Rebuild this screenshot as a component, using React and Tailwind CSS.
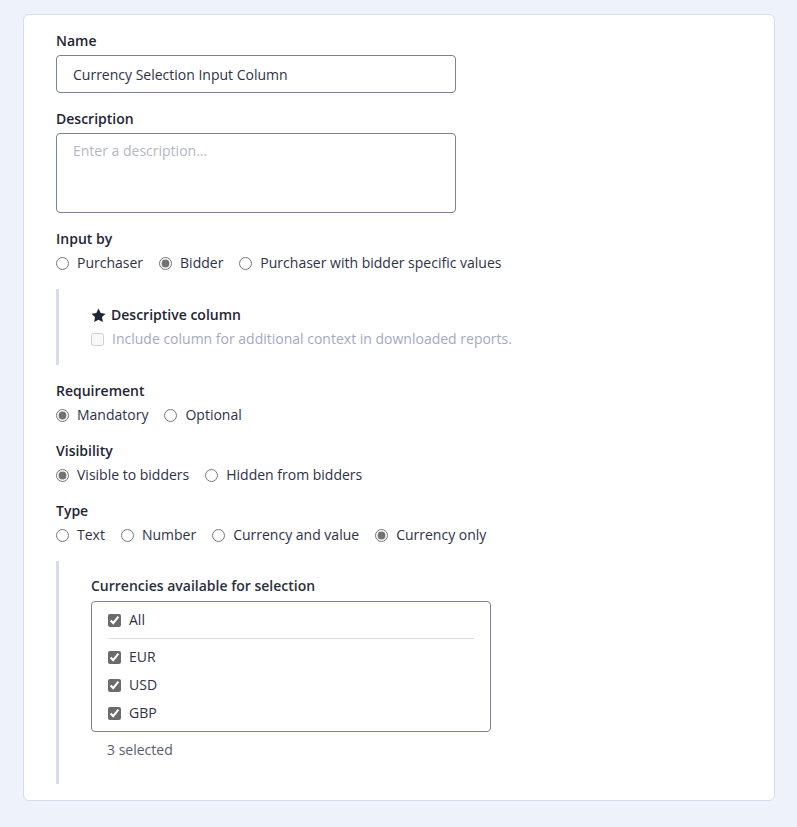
import { useState } from 'react'

function Radio({ name, label, checked, onChange }) {
  return (
    <label className="flex items-center gap-2 h-5 cursor-pointer">
      <input
        type="radio"
        name={name}
        checked={checked}
        onChange={onChange}
        className="w-[13px] h-[13px] accent-[#737373]"
      />
      <span>{label}</span>
    </label>
  )
}

function RadioGroup({ title, name, options, value, setValue }) {
  return (
    <div className="flex flex-col gap-1">
      <div className="font-semibold text-[#1f2533] h-5 leading-5">{title}</div>
      <div className="flex items-center gap-4">
        {options.map(o => (
          <Radio key={o} name={name} label={o} checked={value === o} onChange={() => setValue(o)} />
        ))}
      </div>
    </div>
  )
}

const CURRENCIES = ['EUR', 'USD', 'GBP']

export default function App() {
  const [inputBy, setInputBy] = useState('Bidder')
  const [req, setReq] = useState('Mandatory')
  const [vis, setVis] = useState('Visible to bidders')
  const [type, setType] = useState('Currency only')
  const [picked, setPicked] = useState(CURRENCIES)

  const toggle = c => setPicked(p => (p.includes(c) ? p.filter(x => x !== c) : [...p, c]))
  const all = picked.length === CURRENCIES.length

  return (
    <div className="min-h-screen bg-[#eef2fb] pt-[14px] pl-[23px] pr-[22px] pb-6 text-sm leading-5 text-[#2e3147] font-['Open_Sans',sans-serif]">
      <div className="bg-white border border-[#d6dcea] rounded-md pt-4 pb-4 px-8 flex flex-col gap-4">
        <div className="flex flex-col gap-1">
          <div className="font-semibold text-[#1f2533]">Name</div>
          <input
            defaultValue="Currency Selection Input Column"
            className="w-[400px] h-[38px] border border-[#7b8296] rounded px-4 text-[#2e3147] outline-none"
          />
        </div>

        <div className="flex flex-col gap-1">
          <div className="font-semibold text-[#1f2533]">Description</div>
          <textarea
            placeholder="Enter a description..."
            className="w-[400px] h-[80px] border border-[#7b8296] rounded px-4 py-[7px] resize-none outline-none placeholder:text-[#b3b7c2]"
          />
        </div>

        <RadioGroup
          title="Input by"
          name="inputBy"
          options={['Purchaser', 'Bidder', 'Purchaser with bidder specific values']}
          value={inputBy}
          setValue={setInputBy}
        />

        <div className="border-l-[3px] border-[#d5dcec] pl-8 py-4 flex flex-col gap-1">
          <div className="flex items-center gap-[5px] font-semibold text-[#1f2533]">
            <svg width="15" height="15" viewBox="0 0 24 24" fill="#1f2533">
              <path d="M12 0.8l3.5 7.1 7.8 1.1-5.7 5.5 1.4 7.8L12 18.6l-7 3.7 1.4-7.8L0.7 9l7.8-1.1z" />
            </svg>
            <span>Descriptive column</span>
          </div>
          <label className="flex items-center gap-2 text-[#a3aac0]">
            <input type="checkbox" disabled className="w-[13px] h-[13px]" />
            <span>Include column for additional context in downloaded reports.</span>
          </label>
        </div>

        <RadioGroup
          title="Requirement"
          name="req"
          options={['Mandatory', 'Optional']}
          value={req}
          setValue={setReq}
        />
        <RadioGroup
          title="Visibility"
          name="vis"
          options={['Visible to bidders', 'Hidden from bidders']}
          value={vis}
          setValue={setVis}
        />
        <RadioGroup
          title="Type"
          name="type"
          options={['Text', 'Number', 'Currency and value', 'Currency only']}
          value={type}
          setValue={setType}
        />

        <div className="border-l-[3px] border-[#d5dcec] pl-8 pt-[15px] pb-6">
          <div className="font-semibold text-[#2a2f3d]">Currencies available for selection</div>
          <div className="mt-[5px] w-[400px] border border-[#7b8296] rounded py-2">
            <label className="flex items-center gap-2 h-5 px-4">
              <input
                type="checkbox"
                checked={all}
                onChange={() => setPicked(all ? [] : CURRENCIES)}
                className="w-[13px] h-[13px] accent-[#6b6b6b]"
              />
              <span>All</span>
            </label>
            <div className="mx-4 my-2 border-t border-[#d9dde7]" />
            <div className="flex flex-col gap-2">
              {CURRENCIES.map(c => (
                <label key={c} className="flex items-center gap-2 h-5 px-4">
                  <input
                    type="checkbox"
                    checked={picked.includes(c)}
                    onChange={() => toggle(c)}
                    className="w-[13px] h-[13px] accent-[#6b6b6b]"
                  />
                  <span>{c}</span>
                </label>
              ))}
            </div>
          </div>
          <div className="mt-2 pl-4 text-[#585d6c]">{picked.length} selected</div>
        </div>
      </div>
    </div>
  )
}
